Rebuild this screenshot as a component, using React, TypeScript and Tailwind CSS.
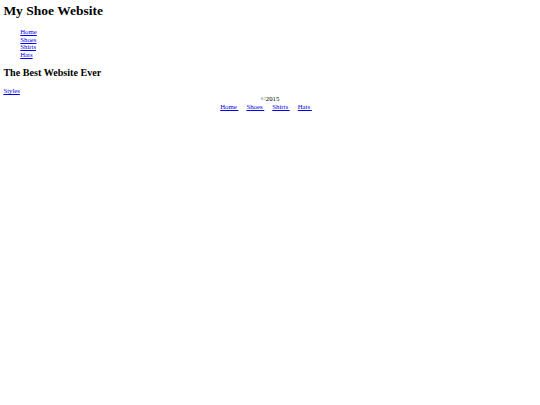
import React from 'react'

const navLinks = ['Home', 'Shoes', 'Shirts', 'Hats']

export default function App() {
  return (
    <div className="min-h-[405px] bg-white px-[3.375px] pt-[3.4px] font-['Liberation_Serif',serif] text-[6.75px] leading-[1.15] text-black">
      <header>
        <h1 className="mb-[9px] text-[13.5px] font-bold leading-[1.15]">My Shoe Website</h1>
        <nav>
          <ul className="my-[6.75px] pl-[16.875px]">
            {navLinks.map(l => (
              <li key={l}>
                <a href="#" className="text-[#0000ee] underline">{l}</a>
              </li>
            ))}
          </ul>
        </nav>
      </header>

      <main>
        <h2 className="my-[8.4px] text-[10.125px] font-bold leading-[1.15]">The Best Website Ever</h2>
        <a href="#" className="text-[#0000ee] underline">Styles</a>
      </main>

      <footer className="text-center">
        <p>©2015</p>
        <p>
          {navLinks.map(l => (
            <a key={l} href="#" className="mr-[8px] text-[#0000ee] underline">{l + '\u00a0'}</a>
          ))}
        </p>
      </footer>
    </div>
  )
}
